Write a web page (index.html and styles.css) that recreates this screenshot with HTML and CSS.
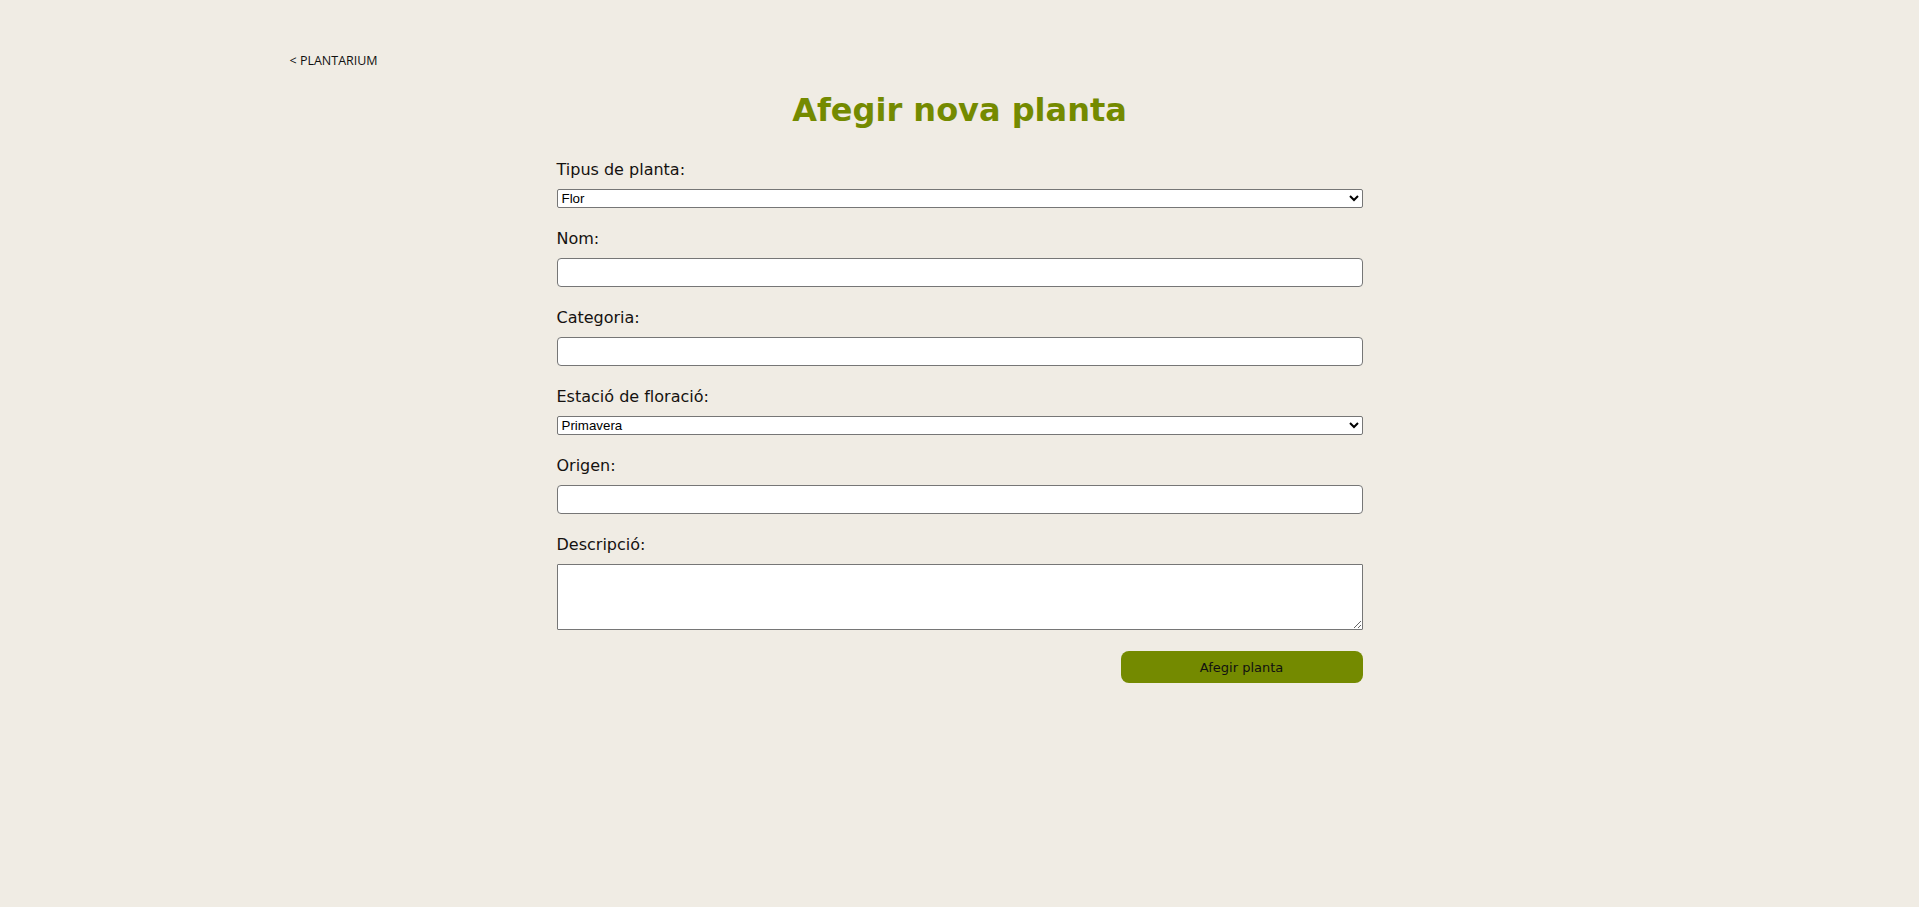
FILE: index.html
```html
<!DOCTYPE html>
<html lang="ca">
<head>
<meta charset="utf-8">
<title>Afegir nova planta</title>
<link rel="stylesheet" href="styles.css">
</head>
<body>
  <header class="topbar">
    <a href="#" class="back">&lt; PLANTARIUM</a>
  </header>
  <main class="page">
    <h1 class="title">Afegir nova planta</h1>
    <form class="plant-form">
      <div class="field">
        <label class="field-label" for="tipus">Tipus de planta:</label>
        <select id="tipus" class="select">
          <option>Flor</option>
          <option>Arbre</option>
        </select>
      </div>
      <div class="field">
        <label class="field-label" for="nom">Nom:</label>
        <input id="nom" class="input" type="text">
      </div>
      <div class="field">
        <label class="field-label" for="categoria">Categoria:</label>
        <input id="categoria" class="input" type="text">
      </div>
      <div class="field">
        <label class="field-label" for="estacio">Estació de floració:</label>
        <select id="estacio" class="select">
          <option>Primavera</option>
          <option>Estiu</option>
          <option>Tardor</option>
          <option>Hivern</option>
        </select>
      </div>
      <div class="field">
        <label class="field-label" for="origen">Origen:</label>
        <input id="origen" class="input" type="text">
      </div>
      <div class="field">
        <label class="field-label" for="descripcio">Descripció:</label>
        <textarea id="descripcio" class="textarea"></textarea>
      </div>
      <div class="actions">
        <button type="submit" class="submit">Afegir planta</button>
      </div>
    </form>
  </main>
</body>
</html>
```

FILE: styles.css
```css
html, body {
  margin: 0;
  padding: 0;
}

body {
  background: #f0ece4;
  color: #151210;
  font-family: "DejaVu Sans", Verdana, sans-serif;
}

.topbar {
  width: 1340px;
  margin: 0 auto;
  padding-top: 50px;
}

.back {
  display: inline-block;
  font-family: "Open Sans", "Noto Sans", sans-serif;
  font-size: 12.5px;
  line-height: 16px;
  color: #111;
  text-decoration: none;
}

.page {
  width: 806px;
  margin: 0 auto;
}

.title {
  margin: 23px 0 31px;
  text-align: center;
  font-size: 32px;
  line-height: 37px;
  font-weight: bold;
  color: #748a00;
}

.plant-form {
  display: flex;
  flex-direction: column;
}

.field {
  display: flex;
  flex-direction: column;
  margin-bottom: 21px;
}

.field-label {
  font-size: 16px;
  line-height: 19px;
  margin-bottom: 10px;
}

.select {
  width: 100%;
  height: 19px;
  box-sizing: border-box;
  font-family: "Liberation Sans", Arial, sans-serif;
  font-size: 13.33px;
  color: #000;
  background: #fff;
  border: 1px solid #767676;
  border-radius: 2px;
}

.input {
  width: 100%;
  height: 29px;
  box-sizing: border-box;
  padding: 4px 6px;
  font-family: "Liberation Sans", Arial, sans-serif;
  font-size: 13.33px;
  background: #fff;
  border: 1px solid #767676;
  border-radius: 4px;
}

.textarea {
  width: 100%;
  height: 66px;
  box-sizing: border-box;
  padding: 4px 6px;
  font-family: "Liberation Mono", monospace;
  font-size: 13.33px;
  background: #fff;
  border: 1px solid #767676;
  border-radius: 1px;
}

.actions {
  display: flex;
  justify-content: flex-end;
}

.submit {
  width: 30%;
  height: 32px;
  border: none;
  border-radius: 8px;
  background: #748a00;
  color: #111;
  font-family: "DejaVu Sans", Verdana, sans-serif;
  font-size: 13px;
  cursor: pointer;
}
```
